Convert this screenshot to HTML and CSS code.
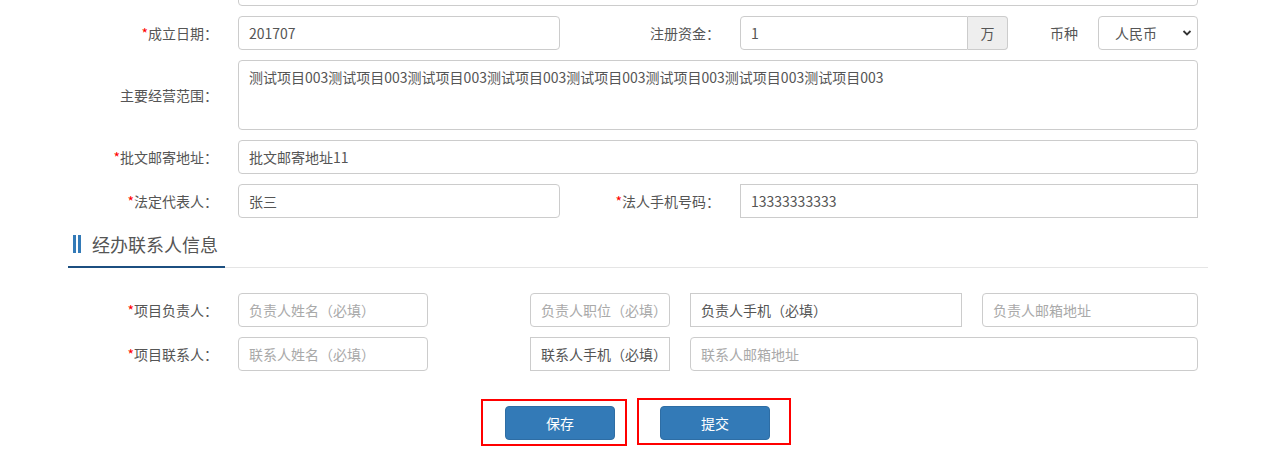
FILE: index.html
```html
<!DOCTYPE html>
<html lang="zh-CN">
<head>
<meta charset="utf-8">
<title>form</title>
<link rel="stylesheet" href="styles.css">
</head>
<body>
<div class="page">
  <div class="row row-cut">
    <span class="lbl"></span>
    <input class="ctl w-full" type="text" value="">
  </div>

  <div class="row">
    <label class="lbl"><span class="req">*</span>成立日期：</label>
    <input class="ctl w-half" type="text" value="201707">
    <label class="lbl lbl2">注册资金：</label>
    <div class="igroup">
      <input class="ctl ig-input" type="text" value="1">
      <span class="addon">万</span>
    </div>
    <label class="lbl lbl3">币种</label>
    <div class="selwrap">
      <select class="ctl sel"><option>人民币</option></select>
      <svg class="chev" width="10" height="8" viewBox="0 0 10 8"><path d="M1.5 2 L5 5.5 L8.5 2" fill="none" stroke="#333" stroke-width="1.8"/></svg>
    </div>
  </div>

  <div class="row">
    <label class="lbl">主要经营范围：</label>
    <textarea class="ctl w-full ta">测试项目003测试项目003测试项目003测试项目003测试项目003测试项目003测试项目003测试项目003</textarea>
  </div>

  <div class="row">
    <label class="lbl"><span class="req">*</span>批文邮寄地址：</label>
    <input class="ctl w-full" type="text" value="批文邮寄地址11">
  </div>

  <div class="row">
    <label class="lbl"><span class="req">*</span>法定代表人：</label>
    <input class="ctl w-half" type="text" value="张三">
    <label class="lbl lbl2"><span class="req">*</span>法人手机号码：</label>
    <input class="ctl sq w-phone" type="text" value="13333333333">
  </div>

  <div class="sec">
    <div class="sec-title">
      <span class="bars"><i></i><i></i></span>
      <span class="sec-text">经办联系人信息</span>
    </div>
  </div>

  <div class="row">
    <label class="lbl"><span class="req">*</span>项目负责人：</label>
    <input class="ctl c1" type="text" placeholder="负责人姓名（必填）">
    <input class="ctl c2" type="text" placeholder="负责人职位（必填）">
    <input class="ctl sq c3" type="text" value="负责人手机（必填）">
    <input class="ctl c4" type="text" placeholder="负责人邮箱地址">
  </div>

  <div class="row">
    <label class="lbl"><span class="req">*</span>项目联系人：</label>
    <input class="ctl c1" type="text" placeholder="联系人姓名（必填）">
    <input class="ctl sq c2" type="text" value="联系人手机（必填）">
    <input class="ctl c5" type="text" placeholder="联系人邮箱地址">
  </div>

  <div class="actions">
    <div class="frame f1"><button class="btn" type="button">保存</button></div>
    <div class="frame f2"><button class="btn" type="button">提交</button></div>
  </div>
</div>
</body>
</html>
```

FILE: styles.css
```css
* { box-sizing: border-box; }
html, body { margin: 0; padding: 0; background: #fff; }
body {
  font-family: "Microsoft YaHei", "Noto Sans CJK SC", "Noto Sans", sans-serif;
  font-size: 14px;
  color: #555;
  overflow: hidden;
}
.page {
  width: 1265px;
  padding-left: 68px;
  margin-top: -28px;
}
.row {
  display: flex;
  align-items: center;
  margin-bottom: 10px;
}
.lbl {
  width: 170px;
  flex: none;
  text-align: right;
  padding-right: 20px;
  color: #555;
  line-height: 20px;
  white-space: nowrap;
}
.lbl2 { width: 180px; }
.lbl3 { width: 90px; }
.req { color: #f00; }
.ctl {
  display: block;
  height: 34px;
  padding: 6px 10px;
  font-family: inherit;
  font-size: 14px;
  color: #555;
  background: #fff;
  border: 1px solid #ccc;
  border-radius: 4px;
  outline: none;
  flex: none;
  margin: 0;
}
.ctl::placeholder { color: #a9a9a9; }
.sq { border-radius: 0; }
.w-full { width: 960px; }
.w-half { width: 322px; }
.w-phone { width: 458px; }
.ta {
  height: 70px;
  resize: none;
  line-height: 20px;
  padding: 6px 10px;
  overflow: hidden;
}
.igroup {
  display: flex;
  width: 268px;
  flex: none;
}
.ig-input {
  width: 228px;
  border-radius: 4px 0 0 4px;
}
.addon {
  width: 40px;
  height: 34px;
  display: flex;
  align-items: center;
  justify-content: center;
  background: #eee;
  border: 1px solid #ccc;
  border-left: 0;
  border-radius: 0 4px 4px 0;
  color: #555;
}
.selwrap {
  position: relative;
  width: 100px;
  flex: none;
}
.sel {
  width: 100px;
  -webkit-appearance: none;
  appearance: none;
  padding-left: 16px;
}
.chev {
  position: absolute;
  right: 6px;
  top: 13px;
  pointer-events: none;
}
.sec {
  border-bottom: 1px solid #e5e5e5;
  margin-right: 57px;
  margin-bottom: 25px;
}
.sec-title {
  display: inline-flex;
  align-items: flex-start;
  height: 40px;
  padding-top: 7px;
  padding-left: 5px;
  padding-right: 7px;
  border-bottom: 2px solid #1c4f80;
  margin-bottom: -1px;
}
.bars {
  display: flex;
  gap: 2px;
  margin-right: 11px;
}
.bars i {
  display: block;
  width: 3px;
  height: 18px;
  background: #337ab7;
}
.sec-text {
  font-size: 18px;
  color: #555;
  line-height: 19px;
}
.c1 { width: 190px; margin-right: 102px; }
.c2 { width: 140px; margin-right: 20px; }
.c3 { width: 272px; margin-right: 20px; }
.c4 { width: 216px; }
.c5 { width: 508px; }
.actions {
  display: flex;
  align-items: flex-start;
  margin-top: 27px;
  padding-left: 413px;
  gap: 10px;
}
.frame {
  border: 2px solid #f00;
  flex: none;
}
.f1 { padding: 5px 10px 4px 22px; margin-top: 1px; }
.f2 { padding: 6px 19px 3px 21px; }
.btn {
  display: block;
  width: 110px;
  height: 34px;
  background: #337ab7;
  border: 1px solid #2e6da4;
  border-radius: 4px;
  color: #fff;
  font-family: inherit;
  font-size: 14px;
  padding: 0;
}
```
